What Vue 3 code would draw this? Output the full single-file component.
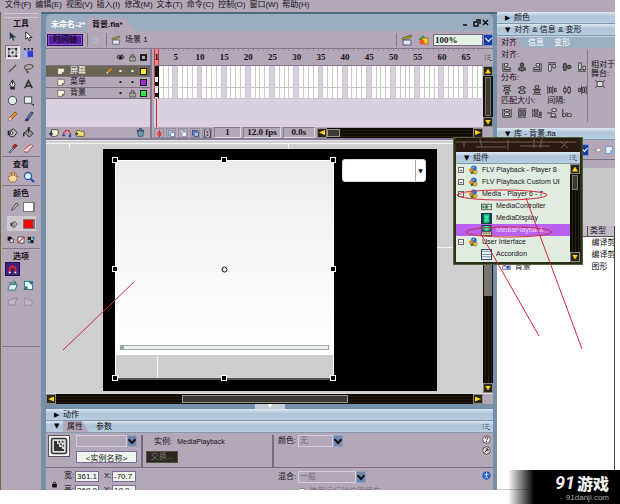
<script setup>
import { h, ref } from 'vue'

const glyphs = {
  arrow: '<path d="M3 1v8l2-2 2 4 1-1-1-3h3z" fill="#1f3440" stroke="#788" stroke-width=".5"/>',
  subarrow: '<path d="M3 1v8l2-2 2 4 1-1-1-3h3z" fill="#fff" stroke="#222"/>',
  transform: '<rect x="2" y="2" width="8" height="8" fill="none" stroke="#111" stroke-dasharray="2 1"/><path d="M1 1h2v2H1zM9 1h2v2H9zM1 9h2v2H1zM9 9h2v2H9zM5 5h2v2H5z" fill="#111"/>',
  fillx: '<rect x="1" y="4" width="10" height="7" fill="#2c3fd0"/><path d="M1 4h4v7H1z" fill="#9fb0f0"/><path d="M1 1h2v2H1zM5 1h2v2H5zM9 1h2v2H9z" fill="#223"/>',
  line: '<path d="M2 10l8-8" stroke="#444" stroke-width="1.2"/>',
  lasso: '<path d="M3 7C-1 3 5 1 9 2s1 5-4 5c-3 0-2 2 0 2s0 2-1 2" fill="none" stroke="#554" stroke-width="1.2"/>',
  pen: '<path d="M6 1L3 6l2 3h2l2-3z" fill="#dde" stroke="#222"/><path d="M6 2v4M4 9h4v2H4z" stroke="#222" fill="#345"/>',
  letter: '<path d="M2 10L6 2l4 8M3.500 7.500h5" fill="none" stroke="#333" stroke-width="1.800"/>',
  oval: '<circle cx="6" cy="6" r="4.500" fill="#e6f2f2" stroke="#333"/>',
  rect: '<rect x="1.500" y="2" width="8" height="7" fill="#e6f2f2" stroke="#444"/><path d="M9 10h3v2z" fill="#111"/>',
  pencil: '<path d="M2 10l1-3 6-6 2 2-6 6z" fill="#f39a25" stroke="#753"/><path d="M2 10l1-3 2 2z" fill="#fff"/>',
  brush: '<path d="M5 6l4-5 2 1-4 6z" fill="#567cc4" stroke="#335"/><path d="M1 11c2 0 1-4 4-4l2 2c-1 3-4 2-6 2z" fill="#2c3c78"/>',
  ink: '<path d="M2 5l5-3 4 4-4 5-4-1z" fill="#bbb" stroke="#222"/><circle cx="5" cy="6.500" r="1.500" fill="#eee" stroke="#222"/><path d="M1.500 4v5" stroke="#222" stroke-width="1.500"/>',
  bucket: '<path d="M2 6l4-4 5 5-4 4z" fill="#999" stroke="#222"/><path d="M6 6V1h2M2 6c-2 1-1 4-1 4" fill="none" stroke="#222" stroke-width="1.500"/>',
  dropper: '<path d="M2 10l5-5 1 1-5 5z" fill="#7cc3d8" stroke="#456"/><path d="M6 4l3-3 2 2-3 3z" fill="#c22" stroke="#622"/>',
  eraser: '<path d="M1 8l6-6 4 1-6 7H2z" fill="#f2b9bd" stroke="#955"/><path d="M1 8l3-.500 6-5" stroke="#fff" fill="none"/>',
  hand: '<path d="M3 11L1 6l1-1 1 1V2h1l1 3V1h2v4l1-3h1v4l2-1-2 5-1 1z" fill="#f7d9a0" stroke="#8b5a26" stroke-width=".7"/>',
  magnify: '<circle cx="5" cy="5" r="3.500" fill="#dff" stroke="#2d5aa8" stroke-width="1.300"/><path d="M7.500 7.500L11 11" stroke="#2246a0" stroke-width="2"/>',
  stroke: '<path d="M2 10l1-3 5-6 2 2-6 6z" fill="#bbb" stroke="#333"/>',
  bw: '<path d="M1 1h6v6H1z" fill="#111"/><path d="M4.500 4.500h5v5h-5z" fill="#fff" stroke="#111"/>',
  none: '<rect x="1.500" y="1.500" width="9" height="9" fill="#fff" stroke="#111"/><path d="M2 10l8-8" stroke="#e11" stroke-width="1.600"/>',
  swap: '<path d="M1 1h5v5H1zM5 6h5v5H5z" fill="#222"/><path d="M7 2h3v4M2 7v3h3" stroke="#1a8490" fill="none" stroke-width="2"/>',
  magnet: '<path d="M2 10V6a4 4 0 018 0v4" fill="none" stroke="#e02525" stroke-width="2.400"/><path d="M1 9h2.500v2H1zM8.500 9H11v2H8.500z" fill="#fff"/>',
  skew: '<path d="M1 11l2-6h8l-2 6z" fill="#dff5f5" stroke="#247480"/><path d="M2 3h8M7 1l3 2-3 2" fill="none" stroke="#247480"/>',
  scale: '<rect x="1.500" y="1.500" width="9" height="9" fill="#e8fafa" stroke="#247480"/><path d="M2 7h3v3H2zM6 2h4v4z" fill="#247480"/>',
  distort: '<path d="M1 5l10-3-3 8H2z" fill="#bfb6c4" stroke="#8d8294"/>',
  envelope: '<path d="M2 10V2l3 2 5 1v5z" fill="#bfb6c4" stroke="#8d8294" stroke-dasharray="2 1"/>',
  clap: '<path d="M2 6h8v5H2z" fill="#e4e6f4" stroke="#557"/><path d="M1 4l9-3 .500 2L2 6z" fill="#a8a028" stroke="#553" stroke-width=".7"/>',
  symbol: '<path d="M1 6l5-5 4 5z" fill="#2a9c54"/><rect x="5" y="4" width="6" height="6" fill="#efd32e" stroke="#a72"/><circle cx="5" cy="8" r="2.600" fill="#ea5a2c"/>',
  eye: '<path d="M1 6c2-4 8-4 10 0-2 3-8 3-10 0z" fill="#888" stroke="#111"/><circle cx="6" cy="6" r="2" fill="#111"/><path d="M2 2l2 2M9 2L8 4" stroke="#111"/>',
  lock: '<path d="M4 6V4a2 2 0 014 0v2" fill="none" stroke="#333" stroke-width="1.200"/><rect x="2.500" y="5.500" width="7" height="5" fill="#cfd2b4" stroke="#333"/><path d="M4 8h4" stroke="#555"/>',
  padlock: '<path d="M4 6V4a2 2 0 014 0v2" fill="none" stroke="#111" stroke-width="1.500"/><rect x="2" y="5" width="8" height="6" fill="#111"/>',
  page: '<path d="M1 2h10v6l-3 3H1z" fill="#f7f6dc" stroke="#554"/><path d="M11 8H8v3z" fill="#998" stroke="#554"/>',
  addlayer: '<path d="M3 2h8v6l-3 2H3z" fill="#f7f6dc" stroke="#443"/><path d="M0 7h5M2.500 4.500v5" stroke="#135" stroke-width="1.500"/>',
  guide: '<path d="M2 8c0-7 8-7 8 0" fill="none" stroke="#c22" stroke-width="1.600" stroke-dasharray="3 1"/><path d="M0 8h4v2H0zM8 8h3v3H8z" fill="#2848a8"/>',
  folder: '<path d="M2 3h4l1 1h4v6H2z" fill="#f2e27e" stroke="#653"/><path d="M0 7h4" stroke="#135" stroke-width="1.500"/>',
  trash: '<path d="M2 4h8l-1 7H3z" fill="#6f9cb8" stroke="#245"/><path d="M1 3h10M4 1h4" stroke="#245" stroke-width="1.500"/>',
  center: '<path d="M6 1v10M4 5l2-2 2 2v3L6 10 4 8z" stroke="#d22" fill="#e66"/>',
  onion: '<rect x="2" y="2" width="6" height="6" fill="#b9c6ea" stroke="#68a"/><rect x="5" y="5" width="5" height="5" fill="#fff" stroke="#57a"/>',
  onion2: '<circle cx="4" cy="4" r="2.500" fill="#eef" stroke="#88a"/><rect x="4" y="4" width="6" height="6" fill="#f5f5ff" stroke="#88a"/>',
  onion3: '<rect x="2" y="2" width="6" height="6" fill="#7f97d8" stroke="#347"/><rect x="4" y="4" width="6" height="6" fill="#a9bbea" stroke="#347"/>',
  marks: '<path d="M4 1H2v10h2M8 1h2v10H8" fill="none" stroke="#334"/><path d="M5 3h2v2H5zM5 7h2v2H5z" fill="#334"/>',
  options: '<path d="M1 2h2M5 2h5M1 5h2M5 5h5M1 8h2M5 8h4" stroke="#445"/><path d="M9 9h3l-1.500 2z" fill="#111"/>',
  back: '<path d="M2 4h5v5M2 9h5" fill="none" stroke="#cfc4d3"/>',
  help: '<circle cx="6" cy="6" r="5" fill="#fff" stroke="#333"/><path d="M4 5c0-3 4-3 4-.500 0 1-2 1-2 2.500M6 8v1.500" fill="none" stroke="#111" stroke-width="1.300"/>',
  edit: '<circle cx="6" cy="6" r="5" fill="#ddd" stroke="#333"/><path d="M3.500 8.500l4-4M5 4h3v3" fill="none" stroke="#222" stroke-width="1.300"/>',
  access: '<circle cx="6" cy="6" r="5.500" fill="#1d5fc4"/><circle cx="6" cy="3" r="1" fill="#fff"/><path d="M3 5h6M6 5v2L4 10M6 7l2 3" stroke="#fff" fill="none"/>',
  balls: '<path d="M2 7l4-3 2 6-4 1z" fill="#267a35"/><circle cx="7" cy="4" r="3.500" fill="#2c70c2"/><circle cx="3.500" cy="6" r="2.500" fill="#e88a26"/><circle cx="8.500" cy="8.500" r="2.500" fill="#edb32d" stroke="#754" stroke-width=".5"/><circle cx="6.500" cy="3" r="1" fill="#9cd0ff"/>',
  ctl: '<rect x=".5" y="3.500" width="11" height="6" fill="#cfdccf" stroke="#465"/><path d="M2 5v3l2-1.500zM5 5h2v3H5zM8 6h3" fill="#264" stroke="#476" stroke-width=".6"/>',
  disp: '<rect x=".5" y=".5" width="11" height="11" fill="#13bd78" stroke="#142c44"/><path d="M1 1h2v10H1zM9 1h2v10H9z" fill="#17406b"/><path d="M3 3h6L7 6l2 3H3l2-3z" fill="#36f08f"/>',
  play: '<rect x="1" y=".5" width="10" height="6" fill="#1aa86c" stroke="#142c44"/><path d="M4 1h4v5H4z" fill="#3af294"/><rect x=".5" y="7.500" width="11" height="4" fill="#e0dcb8" stroke="#543"/><path d="M2 9.500h8" stroke="#653" stroke-dasharray="2 1"/>',
  acc: '<rect x=".5" y=".5" width="11" height="11" fill="#f8fbff" stroke="#23405f"/><path d="M1 2.500h10M1 6h10M1 8.500h10" stroke="#6483a8"/>',
  clip: '<rect x="1" y="2" width="10" height="8" fill="#dde4ff" stroke="#669"/><rect x="2" y="3" width="3" height="3" fill="#d33"/><rect x="6" y="5" width="4" height="4" fill="#2450b8"/>',
  pin: '<path d="M1 6h4M5 3v6M5 4h5v4H5z" stroke="#999" fill="#eee"/>',
  newlib: '<rect x="1" y="2" width="8" height="8" fill="#eef4ff" stroke="#5a8fd0"/><path d="M6 6h5v5H6z" fill="#7fb2ea"/>',
  stageFit: '<rect x="2.500" y="3" width="7" height="6" fill="#ddd" stroke="#333"/><path d="M0 1l2 2M12 1l-2 2M0 11l2-2M12 11l-2-2" stroke="#333"/>',
  l: '<path d="M1 1v10h10" fill="none" stroke="#222"/><path d="M3 2h4v3H3zM3 7h7v2H3z" fill="#eee" stroke="#222"/>',
  ch: '<path d="M6 0v12" stroke="#222"/><path d="M4 2h4v3H4zM2 7h8v3H2z" fill="#777" stroke="#222"/>',
  r: '<path d="M11 1v10H1" fill="none" stroke="#222"/><path d="M5 2h4v3H5zM2 7h7v2H2z" fill="#eee" stroke="#222"/>',
  t: '<path d="M1 1h10" stroke="#222"/><path d="M2 3h3v8H2zM7 3h3v4H7z" fill="#eee" stroke="#222"/>',
  cv: '<path d="M0 6h12" stroke="#222"/><path d="M2 2h3v8H2zM7 4h3v4H7z" fill="#777" stroke="#222"/>',
  b: '<path d="M1 11h10" stroke="#222"/><path d="M2 1h3v8H2zM7 5h3v4H7z" fill="#eee" stroke="#222"/>',
  dt: '<path d="M1 1h10M1 7h10" stroke="#222"/><path d="M3 3h6v2H3zM4 9h4v2H4z" fill="#bbb" stroke="#222"/>',
  dm: '<path d="M1 3.500h10M1 8.500h10" stroke="#222"/><path d="M4 2h4v3H4zM3 7h6v3H3z" fill="#bbb" stroke="#222"/>',
  db: '<path d="M1 5.500h10M1 11h10" stroke="#222"/><path d="M4 1h4v3H4zM3 7h6v2H3z" fill="#bbb" stroke="#222"/>',
  dl: '<path d="M1 1v10M7 1v10" stroke="#222"/><path d="M3 3h2v6H3zM9 4h2v4H9z" fill="#bbb" stroke="#222"/>',
  dc: '<path d="M3.500 1v10M8.500 1v10" stroke="#222"/><path d="M2 4h3v4H2zM7 3h3v6H7z" fill="#bbb" stroke="#222"/>',
  dr: '<path d="M5.500 1v10M11 1v10" stroke="#222"/><path d="M2 4h2v4H2zM7 3h2v6H7z" fill="#bbb" stroke="#222"/>',
  mw: '<path d="M1 1v10h10V1" fill="none" stroke="#222"/><path d="M3 2h6v2H3zM3 6h6v3H3z" fill="#eee" stroke="#222"/>',
  mh: '<path d="M1 1h10M1 11h10" stroke="#222"/><path d="M2 3h3v6H2zM7 3h3v6H7z" fill="#888" stroke="#222"/>',
  mb: '<path d="M1 1v10M7 11h5" stroke="#222"/><path d="M3 2h4v3H3zM3 7h4v3H3zM9 5h2v4H9z" fill="#999" stroke="#222"/>',
  sv: '<path d="M0 6h6M4 11h8" stroke="#222"/><path d="M6 1h5v3H6zM5 7h5v3H5z" fill="#eee" stroke="#222"/>',
  sh: '<path d="M1 1v10M6 5v6" stroke="#222"/><path d="M1 7h3v3H1zM7 7h4v3H7z" fill="#eee" stroke="#222"/>',
}

const Icon = (p) => h('svg', { viewBox: '0 0 12 12', width: p.s || 10, height: p.s || 10, 'aria-hidden': 'true', innerHTML: glyphs[p.n] })
Icon.props = ['n', 's']

const menus = ['文件(F)', '编辑(E)', '视图(V)', '插入(I)', '修改(M)', '文本(T)', '命令(C)', '控制(O)', '窗口(W)', '帮助(H)']
const tools = ['arrow', 'subarrow', 'transform', 'fillx', 'line', 'lasso', 'pen', 'letter', 'oval', 'rect', 'pencil', 'brush', 'ink', 'bucket', 'dropper', 'eraser']
const layers = [
  { name: '屏幕', color: '#f4ee2a', active: true },
  { name: '菜单', color: '#9a28d8' },
  { name: '背景', color: '#2ce84a', locked: true },
]
const frames = Array.from({ length: 68 }, (_, i) => i + 1)
const marks = [5, 10, 15, 20, 25, 30, 35, 40, 45, 50, 55, 60, 65]
const alignRow = ['l', 'ch', 'r', 't', 'cv', 'b']
const spreadRow = ['dt', 'dm', 'db', 'dl', 'dc', 'dr']
const matchRow = ['mw', 'mh', 'mb', 'sv', 'sh']
const components = [
  { name: 'FLV Playback - Player 8', icon: 'balls', sign: '+' },
  { name: 'FLV Playback Custom UI', icon: 'balls', sign: '+' },
  { name: 'Media - Player 6 - 7', icon: 'balls', sign: '−' },
  { name: 'MediaController', icon: 'ctl' },
  { name: 'MediaDisplay', icon: 'disp' },
  { name: 'MediaPlayback', icon: 'play' },
  { name: 'User Interface', icon: 'balls', sign: '−' },
  { name: 'Accordion', icon: 'acc' },
]
const selected = ref('MediaPlayback')
const handles = [[69, 19], [178, 19], [287, 19], [69, 128], [287, 128], [69, 237], [178, 237], [287, 237]]
</script>

<template>
  <div class="app">
    <nav class="menubar"><a v-for="m in menus" :key="m" href="#">{{ m }}</a></nav>
    <div class="workspace">
      <aside class="tools">
        <div class="grip"></div>
        <h2>工具</h2>
        <div class="toolgrid">
          <button v-for="t in tools" :key="t" :class="{ on: t === 'transform' }" :aria-label="t"><Icon :n="t" :s="11" /></button>
        </div>
        <h2 class="ruled">查看</h2>
        <div class="toolgrid">
          <button aria-label="hand"><Icon n="hand" :s="12" /></button>
          <button aria-label="zoom"><Icon n="magnify" :s="12" /></button>
        </div>
        <h2 class="ruled">颜色</h2>
        <div class="ink"><Icon n="stroke" /><button class="swatch" aria-label="stroke color"></button></div>
        <div class="ink lit"><Icon n="ink" :s="8" /><button class="swatch red" aria-label="fill color"></button></div>
        <div class="trio">
          <button aria-label="black and white"><Icon n="bw" :s="8" /></button>
          <button aria-label="no color"><Icon n="none" :s="8" /></button>
          <button aria-label="swap colors"><Icon n="swap" :s="8" /></button>
        </div>
        <h2 class="ruled">选项</h2>
        <div class="toolgrid opts">
          <button class="snap" aria-label="snap"><Icon n="magnet" :s="9" /></button><i></i>
          <button aria-label="skew"><Icon n="skew" :s="11" /></button>
          <button aria-label="scale"><Icon n="scale" :s="11" /></button>
          <button aria-label="distort"><Icon n="distort" :s="11" /></button>
          <button aria-label="envelope"><Icon n="envelope" :s="11" /></button>
        </div>
        <hr>
      </aside>

      <main class="center">
        <section class="doc">
          <header class="tabs">
            <button class="tab">未命名-2*</button>
            <button class="tab current">背景.fla*</button>
            <span class="fill"></span>
            <svg class="winbtns" width="28" height="9" viewBox="0 0 28 9"><path d="M2 7h4M13 4h4v4h-4zM15 2h4v4M22 2l5 5M27 2l-5 5" fill="none" stroke="#111" stroke-width="1.500" /></svg>
          </header>
          <div class="editbar">
            <button class="timebtn">时间轴</button>
            <i class="vr"></i>
            <button class="plain" aria-label="back" disabled><Icon n="back" /></button>
            <i class="vr"></i>
            <Icon n="clap" /><span class="scene">场景 1</span>
            <span class="fill"></span>
            <i class="vr"></i>
            <button class="plain" aria-label="edit scene"><Icon n="clap" :s="12" /></button>
            <button class="plain" aria-label="edit symbols"><Icon n="symbol" :s="12" /></button>
            <label class="combo zoomer"><select aria-label="zoom level"><option>100%</option></select><b></b></label>
          </div>

          <div class="timeline">
            <div class="layers">
              <div class="lrow lhead"><span class="fill"></span><Icon n="eye" :s="9" /><Icon n="lock" :s="9" /><em class="chip hollow"></em></div>
              <div v-for="l in layers" :key="l.name" class="lrow" :class="{ active: l.active }">
                <Icon n="page" :s="8" /><span class="lname">{{ l.name }}</span><span class="fill"></span>
                <Icon v-if="l.active" n="pencil" :s="8" />
                <u>•</u>
                <Icon v-if="l.locked" n="lock" :s="9" /><u v-else>•</u>
                <em class="chip" :style="{ background: l.color }"></em>
              </div>
              <div class="void"></div>
              <div class="lrow lfoot">
                <Icon n="addlayer" /><Icon n="guide" /><Icon n="folder" /><span class="fill"></span><Icon n="trash" :s="9" />
              </div>
            </div>
            <div class="framepane">
              <div class="frametop">
                <div class="frames">
                  <div class="ruler">
                    <span v-for="m in marks" :key="m" :style="{ gridColumn: m }">{{ m }}</span>
                    <span class="head" :style="{ gridColumn: 1 }">1</span>
                  </div>
                  <div v-for="l in layers" :key="l.name" class="frow">
                    <i v-for="f in frames" :key="f" :class="{ fifth: f % 5 === 0, key: f === 1, dark: f === 1 && l.active }"></i>
                  </div>
                  <div class="void"><i class="playline"></i></div>
                </div>
                <div class="vside">
                  <button class="plain opt" aria-label="frame view"><Icon n="options" :s="8" /></button>
                  <div class="vscroll"><button class="sb" aria-label="up"></button><i class="thumb"></i><button class="sb sb-down" aria-label="down"></button></div>
                </div>
              </div>
              <div class="framefoot">
                <button v-for="k in ['center', 'onion', 'onion2', 'onion3', 'marks']" :key="k" class="mini" :aria-label="k"><Icon :n="k" :s="9" /></button>
                <output class="w1">1</output><output class="w2">12.0 fps</output><output class="w3">0.0s</output>
                <div class="hscroll"><button class="sb sb-left" aria-label="left"></button><i class="thumb short"></i><span class="fill"></span><button class="sb sb-right" aria-label="right"></button></div>
                <span class="corner"></span>
              </div>
            </div>
          </div>

          <div class="stagewrap">
            <div class="stage">
              <svg class="art" width="436" height="252">
                <defs><linearGradient id="sheet" x2="0" y2="1"><stop offset="0" stop-color="#ececec" /><stop offset=".6" stop-color="#f9faf9" /><stop offset="1" stop-color="#fff" /></linearGradient></defs>
                <path d="M0 2.500h436M23.500 2v6M242.500 2v6M391 106.500h45" stroke="#f4f4f4" fill="none" />
                <rect x="57" y="8" width="334" height="242" fill="#000" />
                <rect x="70" y="20" width="217" height="195" fill="url(#sheet)" />
                <rect x="70" y="214" width="217" height="23" fill="#cecece" />
                <path d="M111.500 215v22" stroke="#f4f4f4" />
                <path d="M69.500 237V19.500h218V237" stroke="#fff" fill="none" />
                <path d="M69 238h218" stroke="#555" stroke-width="2" />
                <rect x="74.500" y="204.500" width="208" height="4" fill="#edf3ee" stroke="#9aa8a0" />
                <rect x="75" y="205" width="3" height="3" fill="#83b58a" />
                <g v-for="(p, i) in handles" :key="i"><rect :x="p[0] - 3" :y="p[1] - 3" width="6" height="6" fill="#fff" /><rect :x="p[0] - 2" :y="p[1] - 2" width="4" height="4" fill="#000" /></g>
                <circle cx="178.500" cy="128.500" r="2.500" fill="#fff" stroke="#111" />
              </svg>
              <label class="stagecombo"><select aria-label="preview list"><option></option></select><b>▼</b></label>
            </div>
            <div class="vscroll tall"><i class="track"></i><i class="thumb"></i><i class="track"></i><button class="sb sb-down" aria-label="down"></button></div>
          </div>
          <div class="stagefoot">
            <div class="hscroll wide"><button class="sb sb-left" aria-label="left"></button><i class="track"></i><i class="thumb"></i><i class="track"></i><button class="sb sb-right" aria-label="right"></button></div>
            <span class="corner"></span>
          </div>
        </section>

        <div class="splitter"><span>▾</span></div>

        <section class="props">
          <header class="bar"><i class="tri">▶</i><span>动作</span></header>
          <header class="bar ptabs">
            <i class="tri">▼</i><button class="ptab current">属性</button><button class="ptab">参数</button><span class="fill"></span><Icon n="options" :s="8" />
          </header>
          <div class="propbody">
            <div class="prow">
              <div class="cell first">
                <span class="kind"><svg width="18" height="18" viewBox="0 0 18 18"><rect x="1.500" y="1.500" width="15" height="15" rx="2" fill="#ddd" stroke="#333" stroke-width="1.500" /><path d="M4 4h3v3h2v3h3v2h2v2H4z" fill="#333" /><path d="M9 4a7 7 0 005 5M12 4l2 2" stroke="#333" stroke-width="1.500" fill="none" stroke-dasharray="2 1" /></svg></span>
                <div class="stack">
                  <label class="combo dim"><select aria-label="symbol type"><option></option></select><b></b></label>
                  <input class="name" aria-label="instance name" value="<实例名称>">
                </div>
              </div>
              <div class="cell second">
                <p>实例:<span class="latin">MediaPlayback</span></p>
                <button class="dark">交换...</button>
              </div>
              <div class="cell third">
                <label class="combo dim w45"><span>颜色:</span><select><option>无</option></select><b></b></label>
              </div>
              <div class="side"><Icon n="help" :s="9" /><Icon n="edit" :s="9" /></div>
            </div>
            <div class="prow low">
              <div class="cell first">
                <span class="lockcol"><Icon n="padlock" :s="7" /></span>
                <div class="nums">
                  <label>宽:<input value="361.1"></label><label>X:<input value="-70.7"></label>
                  <label>高:<input value="368.0"></label><label>Y:<input value="18.0"></label>
                </div>
              </div>
              <div class="cell second"></div>
              <div class="cell third">
                <label class="combo dim w68"><span>混合:</span><select><option>一般</option></select><b></b></label>
                <label class="cache"><input type="checkbox">使用运行时位图缓存</label>
              </div>
              <div class="side"><Icon n="access" :s="9" /></div>
            </div>
          </div>
        </section>
      </main>

      <aside class="dock">
        <header class="bar"><i class="tri">▶</i><span>颜色</span></header>
        <header class="bar"><i class="tri">▼</i><span>对齐 &amp; 信息 &amp; 变形</span></header>
        <div class="atabs"><button class="ptab current">对齐</button><button>信息</button><button>变形</button></div>
        <div class="align">
          <div class="alignmain">
            <p>对齐:</p>
            <div class="arow"><button v-for="k in alignRow" :key="k" :aria-label="k"><Icon :n="k" /></button></div>
            <p>分布:</p>
            <div class="arow"><button v-for="k in spreadRow" :key="k" :aria-label="k"><Icon :n="k" /></button></div>
            <p><span>匹配大小:</span><span>间隔:</span></p>
            <div class="arow"><button v-for="k in matchRow" :key="k" :aria-label="k"><Icon :n="k" /></button></div>
          </div>
          <div class="alignside">相对于<br>舞台:<button aria-label="to stage"><Icon n="stageFit" /></button></div>
        </div>
        <header class="bar"><i class="tri">▼</i><span>库 - 背景.fla</span></header>
        <div class="libbar"><label class="combo"><select aria-label="library"><option></option></select><b></b></label><Icon n="pin" /><Icon n="newlib" /></div>
        <div class="libcount"></div>
        <div class="preview"></div>
        <table class="lib">
          <thead><tr><th></th><th>类型</th></tr></thead>
          <tbody>
            <tr><td></td><td>编译剪</td></tr>
            <tr><td></td><td>编译剪</td></tr>
            <tr><td><Icon n="clip" :s="9" /> 背景</td><td>图形</td></tr>
          </tbody>
        </table>
        <div class="libvoid"></div>
      </aside>
    </div>

    <section class="floating">
      <div class="cap"><svg width="100%" height="13"><path d="M0 4h120M8 4v5M20 9h30M24 1l2 8M52 2v10M64 8h30M78 1v9M86 1l-2 9M104 3l8 7M112 3l-7 7" stroke="#75604e" fill="none" /></svg></div>
      <header class="bar"><i class="tri">▼</i><span>组件</span><span class="fill"></span><Icon n="options" :s="8" /></header>
      <div class="floatbody">
        <ul>
          <li v-for="c in components" :key="c.name" :class="{ child: !c.sign, sel: c.name === selected }" @click="selected = c.name">
            <i v-if="c.sign" class="sign">{{ c.sign }}</i><Icon :n="c.icon" :s="c.sign ? 10 : 11" /><span>{{ c.name }}</span>
          </li>
        </ul>
        <div class="vscroll"><button class="sb" aria-label="up"></button><i class="thumb small"></i><i class="track"></i><button class="sb sb-down" aria-label="down"></button></div>
      </div>
    </section>

    <svg class="notes" width="620" height="504" fill="none" stroke="#d02a3c">
      <ellipse cx="502" cy="195" rx="45" ry="5" /><ellipse cx="509" cy="232" rx="43" ry="5" />
      <path d="M526 198l56 151M481 234l58 102M134 282L63 350" />
    </svg>

    <footer class="brand"><div><em>91</em><strong>游戏</strong></div><small>91danji.com</small></footer>
  </div>
</template>

<style>
body { margin: 0; background: #fff; }
</style>

<style scoped>
.app {
  --mauve: #b4a7b8; --pale: #d9d0df; --edge: #857790; --blue: #7590a8; --deep: #4d687c;
  position: relative; display: flex; flex-direction: column; box-sizing: border-box;
  min-height: 100vh; padding: 0 5px 14px 0; overflow: hidden;
  font: 8px/10px "Liberation Sans", "Noto Sans CJK SC", sans-serif; color: #161218;
}
.app * { box-sizing: border-box; }
button, input, select { font: inherit; color: inherit; margin: 0; padding: 0; border: 0; background: none; border-radius: 0; min-width: 0; }
select { appearance: none; outline: 0; }
svg { flex: none; display: block; }
h2, p, ul { margin: 0; padding: 0; list-style: none; }
i, em, u { font-style: normal; text-decoration: none; }
.fill { flex: 1; }
.latin { font-size: 7px; }
.menubar { display: flex; gap: 4px; height: 12px; padding-left: 5px; background: var(--mauve); }
.menubar a { color: inherit; text-decoration: none; white-space: nowrap; min-width: 24px; }
.workspace { flex: 1; display: flex; min-height: 0; }

.tools { flex: none; width: 41px; padding: 0 1px; background: var(--mauve); border-left: 1px solid #6d6738; }
.grip { height: 5px; margin: 1px 2px 0; border: solid #cfc5d2; border-width: 1px 0; }
.tools h2 { font-size: 8px; line-height: 11px; text-align: center; font-weight: bold; }
.tools h2.ruled { border-top: 1px solid var(--edge); margin-top: 1px; height: 14px; padding-top: 2px; }
.toolgrid { display: grid; grid-template-columns: 15px 15px; grid-auto-rows: 14px; row-gap: 2px; column-gap: 1px; padding: 0 3px; }
.toolgrid button, .trio button { display: grid; place-items: center; }
.toolgrid .on { background: #ddd6dd; border: 1px solid; border-color: #777 #eee #eee #777; }
.toolgrid .snap { background: #402080; border: 1px solid #1d0f48; }
.ink { display: flex; align-items: center; justify-content: space-between; height: 15px; margin: 0 4px 2px 5px; padding: 0 1px 0 3px; }
.ink.lit { background: #cfcad0; }
.swatch { width: 12px; height: 10px; background: #fff; border: 1px solid #777; border-right-width: 2px; }
.swatch.red { background: #f00808; }
.trio { display: flex; gap: 2px; padding: 2px 5px 3px; height: 14px; }
.tools hr { border: 0; border-top: 1px solid var(--edge); margin: 38px 0 0; }

.center { flex: 1; min-width: 0; display: flex; flex-direction: column; background: var(--blue); padding: 0 4px 0 5px; border-top: 2px solid var(--deep); }
.doc { flex: 1; display: flex; flex-direction: column; min-height: 0; border-radius: 5px 5px 0 0; overflow: hidden; }
.tabs { display: flex; align-items: flex-end; height: 17px; background: #9cacc0; padding-left: 1px; }
.tab { height: 13px; padding: 0 4px; color: #fff; font-weight: bold; white-space: nowrap; width: 41px; text-align: left; }
.tab.current { color: #161218; background: var(--mauve); clip-path: polygon(0 0, 82% 0, 100% 100%, 0 100%); width: 46px; }
.winbtns { margin: 0 4px 4px 0; }
.editbar { display: flex; align-items: center; gap: 4px; height: 17px; background: var(--mauve); padding-left: 1px; }
.timebtn { width: 36px; height: 12px; background: #56239c; border: 1px solid #31106b; color: #1b0a38; font-weight: bold; box-shadow: inset 0 0 0 1px #8a58cc; }
.vr { width: 1px; height: 14px; background: var(--edge); }
.plain { display: grid; place-items: center; }
.combo { display: flex; align-items: center; height: 12px; }
.combo select { height: 12px; background: #e4f1e4; border: 1px solid #77688a; flex: 1; padding-left: 1px; }
.combo b { width: 10px; height: 12px; display: grid; place-items: center; background: #1c3d9c; border: 1px solid #7a8fd0; }
.combo b::after { content: ""; width: 4px; height: 4px; border: solid #fff; border-width: 0 1px 1px 0; transform: rotate(45deg); margin-top: -2px; }
.combo.dim select { background: var(--mauve); border-color: #d6cbd8; color: #7a6e7c; }
.combo.dim b { background: #7088b0; border-color: #8fa4c4; }
.combo.dim b::after { border-color: #111; border-width: 0 2px 2px 0; }
.zoomer { width: 60px; }
.zoomer, .ruler, output { font-family: "Liberation Serif", serif; font-weight: bold; font-size: 9px; }

.timeline { display: flex; height: 92px; background: var(--mauve); border-top: 1px solid var(--edge); border-bottom: 2px solid #847c98; }
.layers { flex: none; width: 106px; display: flex; flex-direction: column; border-right: 2px solid var(--edge); }
.lrow { display: flex; align-items: center; gap: 3px; height: 11px; padding: 0 3px 0 11px; border-bottom: 1px solid #7b7080; }
.lhead { height: 17px; }
.lrow.active { background: #6c6452; color: #fff; }
.lrow u { width: 9px; text-align: center; }
.lname { padding-left: 2px; }
.chip { width: 7px; height: 7px; border: 1px solid #222; }
.hollow { border-width: 2px; }
.void { flex: 1; background: var(--pale); }
.lfoot { height: 11px; padding: 0 5px 0 3px; border: 0; }
.framepane { flex: 1; min-width: 0; display: flex; flex-direction: column; }
.frametop { flex: 1; display: flex; min-height: 0; }
.frames { flex: 1; min-width: 0; display: flex; flex-direction: column; padding-left: 2px; }
.ruler, .frow { display: grid; grid-template-columns: repeat(68, minmax(0, 1fr)); }
.ruler { height: 17px; border-bottom: 1px solid var(--edge); background: repeating-linear-gradient(90deg, transparent 0 4px, #978a9d 4px 5px) 0 0 / 100% 2px no-repeat; }
.ruler span { grid-row: 1; line-height: 16px; display: flex; justify-content: center; }
.ruler .head { background: #f08a8c; border: 1px solid #c33; border-width: 0 1px; }
.frow { height: 11px; }
.frow i { background: #fff; border: solid #ccc6cc; border-width: 0 1px 1px 0; }
.frow i.fifth { background: #d9d0df; }
.frow i.key { background: radial-gradient(circle at 50% 70%, #111 0 2px, transparent 2px) #fff; border-left: 1px solid #c33; border-right-color: #111; }
.frow i.dark { background: #111; }
.playline { display: block; width: 1px; height: 100%; background: #d22; margin-left: 2px; }
.vside { flex: none; width: 10px; display: flex; flex-direction: column; }
.opt { height: 17px; }
.vscroll { flex: none; width: 10px; display: flex; flex-direction: column; background: #16130d; }
.vside .vscroll { flex: 1; }
.vscroll .thumb { flex: 1; margin: 1px 2px; border: 1px solid #77736a; background: #3c3a34; }
.vscroll .thumb.small { flex: none; height: 15px; }
.vscroll .track { flex: 1; background: repeating-linear-gradient(90deg, #0e0b06 0 2px, #292015 2px 3px); }
.vscroll.tall .thumb { flex: none; height: 34px; background: #777476; margin: 0 1px; }
.vscroll.tall .track:first-child { flex: none; height: 121px; }
.sb { flex: none; width: 10px; height: 10px; background: #28261f; border: 1px solid #8c897c; display: grid; place-items: center; }
.sb::after { content: ""; width: 6px; height: 5px; background: #ffd51e; clip-path: polygon(50% 0, 100% 100%, 0 100%); }
.sb-down::after { clip-path: polygon(0 0, 100% 0, 50% 100%); }
.sb-left::after { clip-path: polygon(100% 0, 100% 100%, 0 50%); }
.sb-right::after { clip-path: polygon(0 0, 100% 50%, 0 100%); }
.framefoot { display: flex; align-items: center; height: 11px; gap: 2px; padding-left: 2px; }
.mini { width: 10px; height: 10px; border: 1px solid #988a9d; display: grid; place-items: center; }
.framefoot output { height: 11px; text-align: center; border: 1px solid; border-color: #897b8f #ddd #ddd #897b8f; line-height: 9px; white-space: nowrap; }
.w1 { width: 27px; } .w2 { width: 38px; } .w3 { width: 32px; }
.hscroll { flex: 1; display: flex; height: 10px; background: repeating-linear-gradient(#0e0b06 0 2px, #241d10 2px 3px); }
.hscroll .thumb { background: #3c3a34; border: 1px solid #99958b; margin: 1px 0; }
.hscroll .short { width: 13px; }
.corner { flex: none; width: 10px; height: 10px; background: var(--mauve); }
.framefoot .corner { margin-left: -2px; }

.stagewrap { flex: 1; display: flex; min-height: 0; background: #cfcfcf; border-top: 1px solid #e4e4e4; }
.stage { position: relative; flex: 1; min-width: 0; overflow: hidden; }
.art { position: absolute; left: 0; top: 0; }
.stagecombo { position: absolute; left: 296px; top: 18px; width: 84px; height: 23px; display: flex; background: #fff; border-radius: 3px; border: 1px solid #ddd; }
.stagecombo select { flex: 1; background: none; }
.stagecombo b { width: 10px; border-left: 1px solid #aaa; font: 6px/21px "DejaVu Sans", sans-serif; text-align: center; }
.stagefoot { display: flex; border-top: 1px solid #ddd; }
.wide .track { flex: 127; }
.wide .thumb { flex: 164; }
.wide .track ~ .track { flex: 126; }
.splitter { height: 5px; display: flex; justify-content: center; }
.splitter span { width: 30px; background: #c2ccd6; color: #fff; line-height: 4px; text-align: center; font-size: 8px; }

.bar { display: flex; align-items: center; gap: 3px; height: 12px; padding: 0 3px 0 8px; white-space: nowrap; background: linear-gradient(#dce8f2, #adc4da 40%, #b7cde0); border-bottom: 1px solid #8298ac; }
.tri { width: 6px; font: 7px/10px "DejaVu Sans", sans-serif; color: #000; }
.ptabs { align-items: stretch; padding-right: 3px; }
.ptabs svg { align-self: center; }
.ptab { padding: 1px 7px 0 4px; width: 26px; white-space: nowrap; }
.ptab.current { background: var(--mauve); clip-path: polygon(0 0, 75% 0, 100% 100%, 0 100%); }
.props { background: var(--mauve); }
.propbody { height: 57px; overflow: hidden; display: flex; flex-direction: column; }
.prow { display: flex; height: 35px; border-bottom: 1px solid #7c6c86; padding: 2px 2px 0 0; flex: none; }
.prow.low { height: 40px; border: 0; padding-top: 3px; }
.cell { border-right: 2px solid #796a84; }
.low .cell { border-color: transparent; }
.first { width: 97px; display: flex; gap: 6px; padding-left: 2px; flex: none; }
.kind { width: 22px; height: 22px; background: #f4f4f4; border: 1px solid #555; display: grid; place-items: center; }
.stack { width: 61px; display: flex; flex-direction: column; gap: 4px; }
.stack input { height: 12px; background: #eef6ee; border: 1px solid #796a9a; text-align: center; }
.second { width: 131px; padding: 2px 0 0 3px; flex: none; }
.second p { padding: 0 0 4px 8px; }
.second p span { padding-left: 5px; }
.dark { width: 32px; height: 12px; background: #2b2821; color: #77735f; border: 1px solid #555040; }
.cell.third { flex: 1; border: 0; padding-left: 4px; display: flex; flex-direction: column; gap: 4px; }
.third .combo span { width: 20px; }
.w45 { width: 65px; }
.w68 { width: 88px; }
.cache { display: flex; align-items: center; gap: 3px; padding-left: 20px; color: #756a78; line-height: 9px; }
.cache input { width: 8px; height: 8px; }
.side { display: flex; flex-direction: column; gap: 2px; }
.lockcol { padding: 10px 0 0 3px; width: 10px; flex: none; }
.nums { display: grid; grid-template-columns: 39px 36px; gap: 3px 1px; margin-left: 2px; grid-auto-rows: 11px; }
.low .first { gap: 0; }
.nums label { display: flex; justify-content: space-between; white-space: nowrap; padding-left: 4px; }
.nums input { width: 24px; height: 11px; background: #eef6ee; border: 1px solid #796a9a; padding-left: 1px; }

.dock { flex: none; width: 118px; background: var(--mauve); display: flex; flex-direction: column; overflow: hidden; }
.dock > .bar { flex: none; }
.atabs { flex: none; display: flex; height: 12px; background: #9cb0c2; color: #fff; border-top: 1px solid #c6d5e2; }
.atabs button { width: 26px; }
.atabs .current { color: #161218; }
.align { flex: none; display: flex; height: 80px; padding: 2px 0 0 4px; }
.alignmain { width: 91px; border-right: 1px solid #86798d; height: 72px; }
.alignmain p { height: 10px; display: flex; gap: 12px; white-space: nowrap; }
.arow { display: flex; gap: 5px; height: 13px; padding-left: 1px; }
.alignside { padding: 10px 0 0 3px; line-height: 9px; white-space: nowrap; }
.alignside button { display: block; margin: 1px 0 0 4px; }
.libbar { flex: none; display: flex; align-items: center; gap: 3px; height: 19px; }
.libbar .combo { width: 93px; }
.libcount { flex: none; height: 9px; border-top: 1px solid #7c6c86; }
.preview { flex: none; height: 58px; background: #c9c6ca; }
.lib { border-collapse: collapse; width: 100%; background: #fff; table-layout: fixed; border-right: 1px solid #444; }
.lib th { height: 10px; padding: 0 0 0 2px; font-weight: normal; text-align: left; background: #c3b7c8; border-bottom: 1px solid #554; border-left: 1px solid #554; }
.lib th:first-child { width: 90px; }
.lib td { height: 12px; padding: 0 0 0 4px; white-space: nowrap; overflow: hidden; }
.lib td svg { display: inline-block; vertical-align: middle; margin-right: 2px; }
.libvoid { flex: 1; background: #fff; border-right: 1px solid #444; border-bottom: 1px solid #ccc; }

.floating { position: absolute; right: 37px; top: 137px; width: 130px; border: 3px solid #2b3018; border-top-width: 1px; outline: 1px solid #566038; outline-offset: -1px; background: #e1ece1; }
.cap { height: 14px; background: #2a1a12; overflow: hidden; }
.floating .bar { height: 12px; }
.floatbody { display: flex; height: 98px; }
.floatbody ul { flex: 1; min-width: 0; }
.floatbody li { display: flex; align-items: center; height: 12px; padding-left: 2px; white-space: nowrap; font-size: 7px; }
.floatbody li span { padding-left: 4px; }
.sign { width: 6px; height: 6px; border: 1px solid #666; background: #fff; line-height: 4px; font-size: 6px; text-align: center; margin-right: 4px; }
.floatbody .child { padding-left: 25px; }
.floatbody .sel { background: #b95ff2; color: #f6dcff; }
.notes { position: absolute; left: 0; top: 0; pointer-events: none; }

.brand { position: absolute; right: 0; bottom: 0; width: 112px; height: 34px; padding: 2px 11px 0 0; background: linear-gradient(90deg, transparent, #000 26px); color: #eee; text-align: right; }
.brand div { display: flex; justify-content: flex-end; gap: 2px; align-items: center; height: 21px; }
.brand em { font: italic bold 18px/20px Roboto, sans-serif; }
.brand strong { font: 900 16px/20px "Noto Sans CJK SC", sans-serif; }
.brand small { display: block; font: 8px/9px "Liberation Sans", sans-serif; color: #aaa; }
</style>
